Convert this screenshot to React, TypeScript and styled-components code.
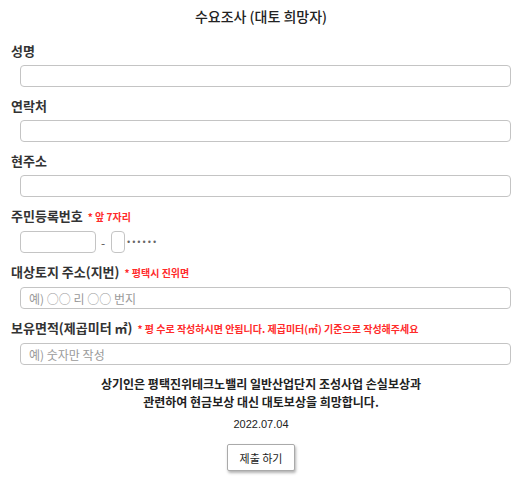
import React from 'react'
import styled, { createGlobalStyle } from 'styled-components'

const GlobalStyle = createGlobalStyle`
  body {
    margin: 0;
    background: #fff;
    font-family: "Noto Sans CJK KR", "Noto Sans", sans-serif;
    color: #222;
  }
`

function App() {
  return (
    <>
      <GlobalStyle />
      <StyledPage>
        <Title>수요조사 (대토 희망자)</Title>

        <Field>
          <Label>성명</Label>
          <TextInput type="text" />
        </Field>

        <Field>
          <Label>연락처</Label>
          <TextInput type="text" />
        </Field>

        <Field>
          <Label>현주소</Label>
          <TextInput type="text" />
        </Field>

        <Field>
          <Label>
            주민등록번호 <Note>* 앞 7자리</Note>
          </Label>
          <IdRow>
            <TextInput type="text" $width="76px" />
            <Dash>-</Dash>
            <TextInput type="text" $width="14px" />
            <Masked>••••••</Masked>
          </IdRow>
        </Field>

        <Field>
          <Label>
            대상토지 주소(지번) <Note>* 평택시 진위면</Note>
          </Label>
          <TextInput type="text" placeholder="예) ○○ 리 ○○ 번지" />
        </Field>

        <Field>
          <Label>
            보유면적(제곱미터 ㎡){' '}
            <Note>* 평 수로 작성하시면 안됩니다. 제곱미터(㎡) 기준으로 작성해주세요</Note>
          </Label>
          <TextInput type="text" placeholder="예) 숫자만 작성" />
        </Field>

        <Statement>
          상기인은 평택진위테크노밸리 일반산업단지 조성사업 손실보상과
          <br />
          관련하여 현금보상 대신 대토보상을 희망합니다.
        </Statement>
        <DateText>2022.07.04</DateText>
        <SubmitButton type="button">제출 하기</SubmitButton>
      </StyledPage>
    </>
  )
}

export default App

const StyledPage = styled.div`
  display: flex;
  flex-direction: column;
  padding: 6px 18px 14px 11px;
`

const Title = styled.h1`
  margin: 0 0 16px;
  text-align: center;
  font-size: 14px;
  font-weight: 500;
  line-height: 20px;
  color: #222;
`

const Field = styled.div`
  display: flex;
  flex-direction: column;
  margin-bottom: 10px;
`

const Label = styled.label`
  font-size: 13px;
  font-weight: 700;
  line-height: 18px;
  color: #333;
  margin-bottom: 5px;
`

const Note = styled.span`
  font-size: 10px;
  font-weight: 600;
  color: #ff2b2b;
  margin-left: 2px;
`

const TextInput = styled.input<{ $width?: string }>`
  box-sizing: border-box;
  margin-left: 9px;
  width: ${(p) => p.$width || 'calc(100% - 9px)'};
  height: 22px;
  padding: 0 8px;
  border: 1px solid #c4c4c4;
  border-radius: 4px;
  font-family: inherit;
  font-size: 12px;
  outline: none;

  &::placeholder {
    color: #9a9a9a;
  }
`

const IdRow = styled.div`
  display: flex;
  align-items: center;

  > input + span + input {
    margin-left: 0;
    padding: 0;
  }
`

const Dash = styled.span`
  font-size: 12px;
  color: #555;
  margin: 0 6px 0 5px;
`

const Masked = styled.span`
  font-family: "DejaVu Sans", sans-serif;
  font-size: 8px;
  color: #666;
  letter-spacing: 0.5px;
  margin-left: 1px;
`

const Statement = styled.p`
  margin: 0;
  text-align: center;
  font-size: 12px;
  font-weight: 700;
  line-height: 18px;
  color: #222;
`

const DateText = styled.div`
  margin-top: 7px;
  text-align: center;
  font-family: "Liberation Sans", Arial, sans-serif;
  font-size: 11px;
  color: #222;
`

const SubmitButton = styled.button`
  align-self: center;
  margin-top: 14px;
  width: 68px;
  height: 27px;
  background: #fff;
  border: 1px solid #aaa;
  border-radius: 2px;
  box-shadow: 1px 2px 3px rgba(0, 0, 0, 0.3);
  font-family: inherit;
  font-size: 11px;
  color: #222;
  cursor: pointer;
`
